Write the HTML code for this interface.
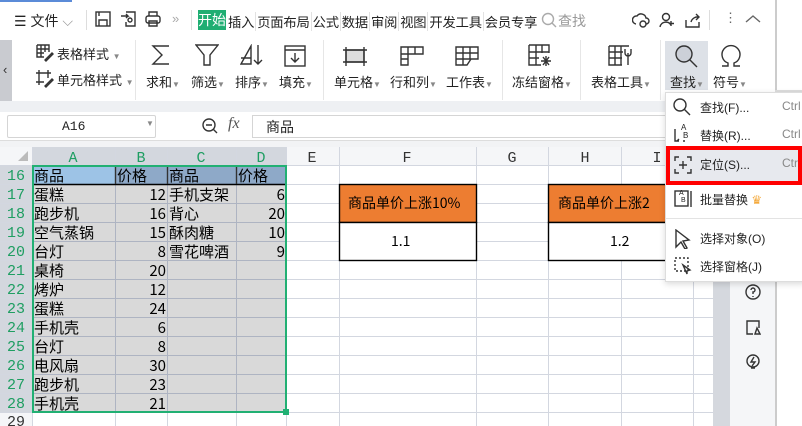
<!DOCTYPE html>
<html><head><meta charset="utf-8"><style>
*{margin:0;padding:0;box-sizing:border-box}
body{width:802px;height:426px;overflow:hidden;background:#fff;position:relative;font-family:"Liberation Sans","Noto Sans CJK SC",sans-serif;color:#222}
.a{position:absolute}
.t{font-size:13px;white-space:nowrap}
.s{font-family:"Liberation Mono","WenQuanYi Zen Hei","Noto Sans CJK SC",monospace}
svg{position:absolute;fill:none;stroke:#333;stroke-width:1.4}
.cell{position:absolute;font-size:15px;line-height:19px;white-space:nowrap;font-family:"WenQuanYi Zen Hei","Noto Sans CJK SC",sans-serif;color:#000}
.num{text-align:right}
.mi{position:absolute;left:700px;font-size:12px;color:#222}
.ck{position:absolute;left:782px;font-size:12px;color:#888}
.tab{display:inline-block;border-right:1px solid #e2e2e2;padding:0 1px}
</style></head><body>
<div class="a" style="left:0;top:0;width:72px;height:2px;background:#5b8bd8"></div>
<div class="a t" style="left:14px;top:11px;font-size:14px">☰ 文件 <span style="color:#999">⌵</span></div>
<div class="a" style="left:86px;top:10px;width:1px;height:20px;background:#ddd"></div>
<svg style="left:95px;top:11px" width="16" height="16"><rect x="1" y="1" width="14" height="14"/><path d="M4 15V9h8v6M4 1v4"/></svg>
<svg style="left:120px;top:11px" width="16" height="16"><path d="M1 5h7l-2-2M8 5l-2 2M6 1h9v14H6v-4"/><circle cx="10" cy="9" r="2"/></svg>
<svg style="left:145px;top:11px" width="16" height="16"><rect x="1" y="5" width="14" height="7" rx="2"/><path d="M4 5V1h8v4M4 10h8v5H4z"/></svg>
<div class="a t" style="left:172px;top:11px;color:#aaa">»</div>
<div class="a" style="left:191px;top:10px;width:1px;height:20px;background:#ddd"></div>
<div class="a t" style="left:198px;top:10px;width:28px;height:20px;background:#1fae72;color:#fff;line-height:20px;text-align:center;font-size:14px">开始</div>
<div class="a t" style="left:227px;top:12px;font-size:13.3px;letter-spacing:-0.2px"><span class="tab">插入</span><span class="tab">页面布局</span><span class="tab">公式</span><span class="tab">数据</span><span class="tab">审阅</span><span class="tab">视图</span><span class="tab">开发工具</span><span class="tab" style="border:none">会员专享</span></div>
<svg style="left:541px;top:12px;stroke:#aaa" width="16" height="16"><circle cx="7" cy="7" r="5.5"/><path d="M11 11l4 4"/></svg>
<div class="a t" style="left:558px;top:11px;color:#999;font-size:14px">查找</div>
<svg style="left:632px;top:12px" width="18" height="16"><path d="M4 12a4 4 0 0 1 1-8 5 5 0 0 1 9 2 3 3 0 0 1 0 6"/><circle cx="11" cy="12" r="3"/></svg>
<svg style="left:659px;top:12px" width="16" height="16"><circle cx="7" cy="5" r="3.5"/><path d="M1 15a6 6 0 0 1 11-2M12 9v5M10 11.5h5"/></svg>
<svg style="left:685px;top:12px" width="16" height="16"><path d="M1 8v7h13V10M6 10a7 7 0 0 1 8-5M11 2l3 3-3 3"/></svg>
<div class="a" style="left:709px;top:10px;width:1px;height:20px;background:#ddd"></div>
<div class="a t" style="left:724px;top:10px;color:#666">⋮</div>
<svg style="left:745px;top:14px;stroke:#666" width="16" height="10"><path d="M1 8l7-6 7 6"/></svg>
<div class="a" style="left:775px;top:0;width:2px;height:92px;background:#ccc"></div>
<div class="a" style="left:0;top:40px;width:12px;height:61px;background:#c9cbd0"></div>
<div class="a t" style="left:3px;top:62px;color:#333">‹</div>
<div class="a" style="left:0;top:101px;width:775px;height:11px;background:#eef0f3"></div>
<svg style="left:36px;top:44px" width="18" height="18"><path d="M1 1h12v7M1 1v12h7M1 5h12M1 9h7M5 1v12M9 1v7M9 16l7-7 1 1-7 7z"/></svg>
<div class="a t" style="left:57px;top:44px">表格样式 <span style="font-size:8px;color:#888">▼</span></div>
<svg style="left:36px;top:70px" width="18" height="18"><path d="M3 0v15M12 0v8M0 3h15M0 12h8M9 16l7-7 1 1-7 7z"/></svg>
<div class="a t" style="left:57px;top:70px">单元格样式 <span style="font-size:8px;color:#888">▼</span></div>
<div class="a" style="left:135px;top:40px;width:1px;height:60px;background:#e6e6e6"></div>
<svg style="left:150px;top:44px" width="22" height="22"><path d="M19 2H3l9 9-9 9h16"/></svg>
<div class="a t" style="left:146px;top:72px">求和<span style="font-size:8px;color:#888">▼</span></div>
<svg style="left:195px;top:44px" width="24" height="22"><path d="M1 1h22l-8 10v10h-6V11z"/></svg>
<div class="a t" style="left:191px;top:72px">筛选<span style="font-size:8px;color:#888">▼</span></div>
<svg style="left:240px;top:44px" width="24" height="22"><path d="M1 20L11 2v18zM1 14h10M18 1v19M14 16l4 4 4-4"/></svg>
<div class="a t" style="left:235px;top:72px">排序<span style="font-size:8px;color:#888">▼</span></div>
<svg style="left:284px;top:45px" width="22" height="22"><rect x="1" y="1" width="20" height="20"/><path d="M1 5h20M11 8v9M7 13l4 4 4-4"/></svg>
<div class="a t" style="left:279px;top:72px">填充<span style="font-size:8px;color:#888">▼</span></div>
<div class="a" style="left:323px;top:40px;width:1px;height:60px;background:#e6e6e6"></div>
<svg style="left:343px;top:46px" width="24" height="20"><rect x="3" y="4" width="18" height="12" fill="#ddd"/><path d="M0 4h24M0 16h24M3 1v19M21 1v19"/></svg>
<div class="a t" style="left:334px;top:72px">单元格<span style="font-size:8px;color:#888">▼</span></div>
<svg style="left:400px;top:46px" width="24" height="20"><path d="M1 1h22v7H8v11H1zM1 8h7M1 13h7M8 1v7M15 1v7"/></svg>
<div class="a t" style="left:390px;top:72px">行和列<span style="font-size:8px;color:#888">▼</span></div>
<svg style="left:455px;top:46px" width="24" height="20"><path d="M1 1h22v12H1zM1 7h22M8 1v18M15 1v12M1 13v6h11l4-6"/></svg>
<div class="a t" style="left:446px;top:72px">工作表<span style="font-size:8px;color:#888">▼</span></div>
<div class="a" style="left:502px;top:40px;width:1px;height:60px;background:#e6e6e6"></div>
<svg style="left:528px;top:44px" width="24" height="24"><path d="M1 1h20v8M1 1v20h12M1 8h20M1 14h10M8 1v20M14 1v8M18 12v10M13 17h10M15 13l6 8M21 13l-6 8"/></svg>
<div class="a t" style="left:512px;top:72px">冻结窗格<span style="font-size:8px;color:#888">▼</span></div>
<div class="a" style="left:580px;top:40px;width:1px;height:60px;background:#e6e6e6"></div>
<svg style="left:608px;top:45px" width="26" height="22"><path d="M1 1h20M1 1v19h13M1 7h14M1 13h13M7 1v19M13 1v19M20 8v12M17 4v4a3 3 0 0 0 6 0V4"/></svg>
<div class="a t" style="left:591px;top:72px">表格工具<span style="font-size:8px;color:#888">▼</span></div>
<div class="a" style="left:660px;top:40px;width:1px;height:60px;background:#e6e6e6"></div>
<div class="a" style="left:665px;top:41px;width:43px;height:49px;background:#dde1e7"></div>
<svg style="left:674px;top:44px" width="24" height="24"><circle cx="10" cy="10" r="8" fill="#ccd0d8"/><path d="M16 16l7 7"/></svg>
<div class="a t" style="left:670px;top:72px">查找<span style="font-size:8px;color:#888">▼</span></div>
<svg style="left:719px;top:44px" width="24" height="24"><path d="M3 22h6v-3a9 9 0 1 1 6 0v3h6"/></svg>
<div class="a t" style="left:713px;top:72px">符号<span style="font-size:8px;color:#888">▼</span></div>
<div class="a" style="left:775px;top:90px;width:27px;height:2px;background:#ddd"></div>
<div class="a" style="left:7px;top:115px;width:149px;height:23px;border:1px solid #d5d5d5;border-radius:2px"></div>
<div class="a t s" style="left:62px;top:119px;font-size:13px">A16</div>
<div class="a" style="left:146px;top:119px;font-size:8px;color:#888">▼</div>
<svg style="left:202px;top:118px" width="16" height="16"><circle cx="7" cy="7" r="6"/><path d="M4 7h6M11 11l4 4"/></svg>
<div class="a" style="left:228px;top:115px;font-size:16px;font-style:italic;font-family:'Liberation Serif',serif;color:#555">fx</div>
<div class="a" style="left:252px;top:115px;width:523px;height:23px;border:1px solid #d5d5d5;border-right:none"></div>
<div class="a t" style="left:266px;top:117px;font-size:14px">商品</div>
<div class="a" style="left:0;top:140px;width:775px;height:7px;background:#f2f3f5;border-top:1px solid #ddd"></div>
<svg style="left:0;top:147px;stroke:none" width="775" height="279">
<rect x="0" y="0" width="775" height="18" fill="#f5f6f8"/>
<rect x="0" y="18" width="32" height="261" fill="#f5f6f8"/>
<rect x="32" y="0" width="254" height="18" fill="#d3d7de"/>
<rect x="0" y="18" width="32" height="247" fill="#d3d7de"/>
<polygon points="28,4 28,14 18,14" fill="#bbb"/>
<rect x="32" y="18" width="254" height="247" fill="#d9d9d9"/>
<rect x="32" y="18" width="83" height="19" fill="#9dc3e6"/>
<rect x="115" y="18" width="171" height="19" fill="#8ea9c8"/>
<g stroke="#d3d7e0" stroke-width="1">
<path d="M32.5 0v279M115.5 0v279M167.5 0v279M236.5 0v279M286.5 0v279M339.5 0v279M476.5 0v279M548.5 0v279M621.5 0v279M693.5 0v279"/>
<path d="M0 18.5h713M0 37.5h713M0 56.5h713M0 75.5h713M0 94.5h713M0 113.5h713M0 132.5h713M0 151.5h713M0 170.5h713M0 189.5h713M0 208.5h713M0 227.5h713M0 246.5h713M0 265.5h713"/>
</g>
<g stroke="#aeb4c2" stroke-width="1">
<path d="M115.5 18v247M167.5 18v247M236.5 18v247M32 37.5h254M32 56.5h254M32 75.5h254M32 94.5h254M32 113.5h254M32 132.5h254M32 151.5h254M32 170.5h254M32 189.5h254M32 208.5h254M32 227.5h254M32 246.5h254"/>
</g>
<path d="M32 37.5h254" stroke="#000"/>
<path d="M115.5 18v19M167.5 18v19M236.5 18v19" stroke="#333"/>
<rect x="339.5" y="37.5" width="137" height="38" fill="#ed7d31" stroke="#000"/>
<rect x="339.5" y="75.5" width="137" height="38" fill="#fff" stroke="#000"/>
<rect x="548.5" y="37.5" width="170" height="38" fill="#ed7d31" stroke="#000"/>
<rect x="548.5" y="75.5" width="170" height="38" fill="#fff" stroke="#000"/>
<rect x="33" y="19" width="253" height="246" fill="none" stroke="#21b073" stroke-width="2"/>
<rect x="283" y="262" width="6" height="6" fill="#21b073"/>
<g fill="#1e9e62" font-family="Liberation Mono,monospace" font-size="15" text-anchor="middle">
<text x="73" y="15">A</text><text x="141" y="15">B</text><text x="201" y="15">C</text><text x="261" y="15">D</text>
<text x="16" y="33">16</text><text x="16" y="52">17</text><text x="16" y="71">18</text><text x="16" y="90">19</text><text x="16" y="109">20</text><text x="16" y="128">21</text><text x="16" y="147">22</text><text x="16" y="166">23</text><text x="16" y="185">24</text><text x="16" y="204">25</text><text x="16" y="223">26</text><text x="16" y="242">27</text><text x="16" y="261">28</text>
</g>
<g fill="#333" font-family="Liberation Mono,monospace" font-size="15" text-anchor="middle">
<text x="312" y="15">E</text><text x="407" y="15">F</text><text x="512" y="15">G</text><text x="585" y="15">H</text><text x="657" y="15">I</text><text x="16" y="279">29</text>
</g>
</svg>
<div class="cell" style="left:34px;top:166px">商品</div><div class="cell" style="left:117px;top:166px">价格</div><div class="cell" style="left:169px;top:166px">商品</div><div class="cell" style="left:238px;top:166px">价格</div>
<div class="cell" style="left:34px;top:185px">蛋糕<br>跑步机<br>空气蒸锅<br>台灯<br>桌椅<br>烤炉<br>蛋糕<br>手机壳<br>台灯<br>电风扇<br>跑步机<br>手机壳</div>
<div class="cell num" style="left:115px;top:185px;width:51px">12<br>16<br>15<br>8<br>20<br>12<br>24<br>6<br>8<br>30<br>23<br>21</div>
<div class="cell" style="left:169px;top:185px">手机支架<br>背心<br>酥肉糖<br>雪花啤酒</div>
<div class="cell num" style="left:236px;top:185px;width:49px">6<br>20<br>10<br>9</div>
<div class="cell" style="left:348px;top:194px;font-size:14px">商品单价上涨10%</div>
<div class="cell" style="left:391px;top:232px;font-size:14px">1.1</div>
<div class="cell" style="left:558px;top:194px;font-size:14px">商品单价上涨2</div>
<div class="cell" style="left:610px;top:232px;font-size:14px">1.2</div>
<div class="a" style="left:713px;top:282px;width:17px;height:144px;background:#d5d8de"></div>
<div class="a" style="left:730px;top:282px;width:45px;height:144px;background:#f5f6f8"></div>
<div class="a" style="left:775px;top:282px;width:2px;height:144px;background:#ccc"></div>
<svg style="left:745px;top:284px" width="16" height="16"><circle cx="8" cy="8" r="7"/><path d="M6 6a2 2 0 1 1 2 2v2M8 12v1"/></svg>
<svg style="left:745px;top:319px" width="16" height="16"><path d="M2 6V2h12v4M2 6v9h6M14 6v3M10 15l2-6 3 6z"/></svg>
<svg style="left:745px;top:354px" width="16" height="16"><circle cx="8" cy="7" r="6"/><path d="M9 3l-3 5h4l-3 4M6 14h4"/></svg>
<div class="a" style="left:665px;top:92px;width:140px;height:190px;background:#fff;border:1px solid #ddd;box-shadow:0 2px 6px rgba(0,0,0,.15)"></div>
<svg style="left:673px;top:98px" width="18" height="18"><circle cx="7" cy="7" r="6"/><path d="M11 11l6 6"/></svg>
<div class="mi" style="top:99px">查找(F)...</div><div class="ck" style="top:99px">Ctrl</div>
<svg style="left:674px;top:125px" width="18" height="18"><path d="M1 4v12h4M9 16h2M3 16l2-2"/></svg>
<div class="a" style="left:681px;top:123px;font-size:8px">A</div><div class="a" style="left:683px;top:131px;font-size:8px">B</div>
<div class="mi" style="top:127px">替换(R)...</div><div class="ck" style="top:127px">Ctrl</div>
<div class="a" style="left:666px;top:146px;width:136px;height:39px;border:4px solid #f00;background:#e7e9ee"></div>
<svg style="left:674px;top:156px" width="18" height="18"><path d="M1 5V1h4M13 1h4v4M17 13v4h-4M5 17H1v-4M9 5v8M5 9h8"/></svg>
<div class="mi" style="top:156px">定位(S)...</div><div class="ck" style="top:156px">Ctr</div>
<div class="a" style="left:666px;top:218px;width:136px;height:1px;background:#e3e3e3"></div>
<svg style="left:674px;top:190px" width="18" height="18"><rect x="1" y="1" width="13" height="15"/><path d="M17 1v16"/></svg>
<div class="a" style="left:679px;top:190px;font-size:7px">A</div><div class="a" style="left:681px;top:197px;font-size:7px">B</div>
<div class="mi" style="top:191px">批量替换 <span style="color:#f4a93b">♛</span></div>
<svg style="left:675px;top:229px" width="16" height="20"><path d="M1 1l13 10-6 1 4 7-2 1-4-7-5 5z"/></svg>
<div class="mi" style="top:230px">选择对象(O)</div>
<svg style="left:674px;top:257px" width="18" height="18"><rect x="1" y="1" width="13" height="13" stroke-dasharray="2 2"/><path d="M9 8l7 5-3 1 0 3z"/></svg>
<div class="mi" style="top:258px">选择窗格(J)</div>
</body></html>
